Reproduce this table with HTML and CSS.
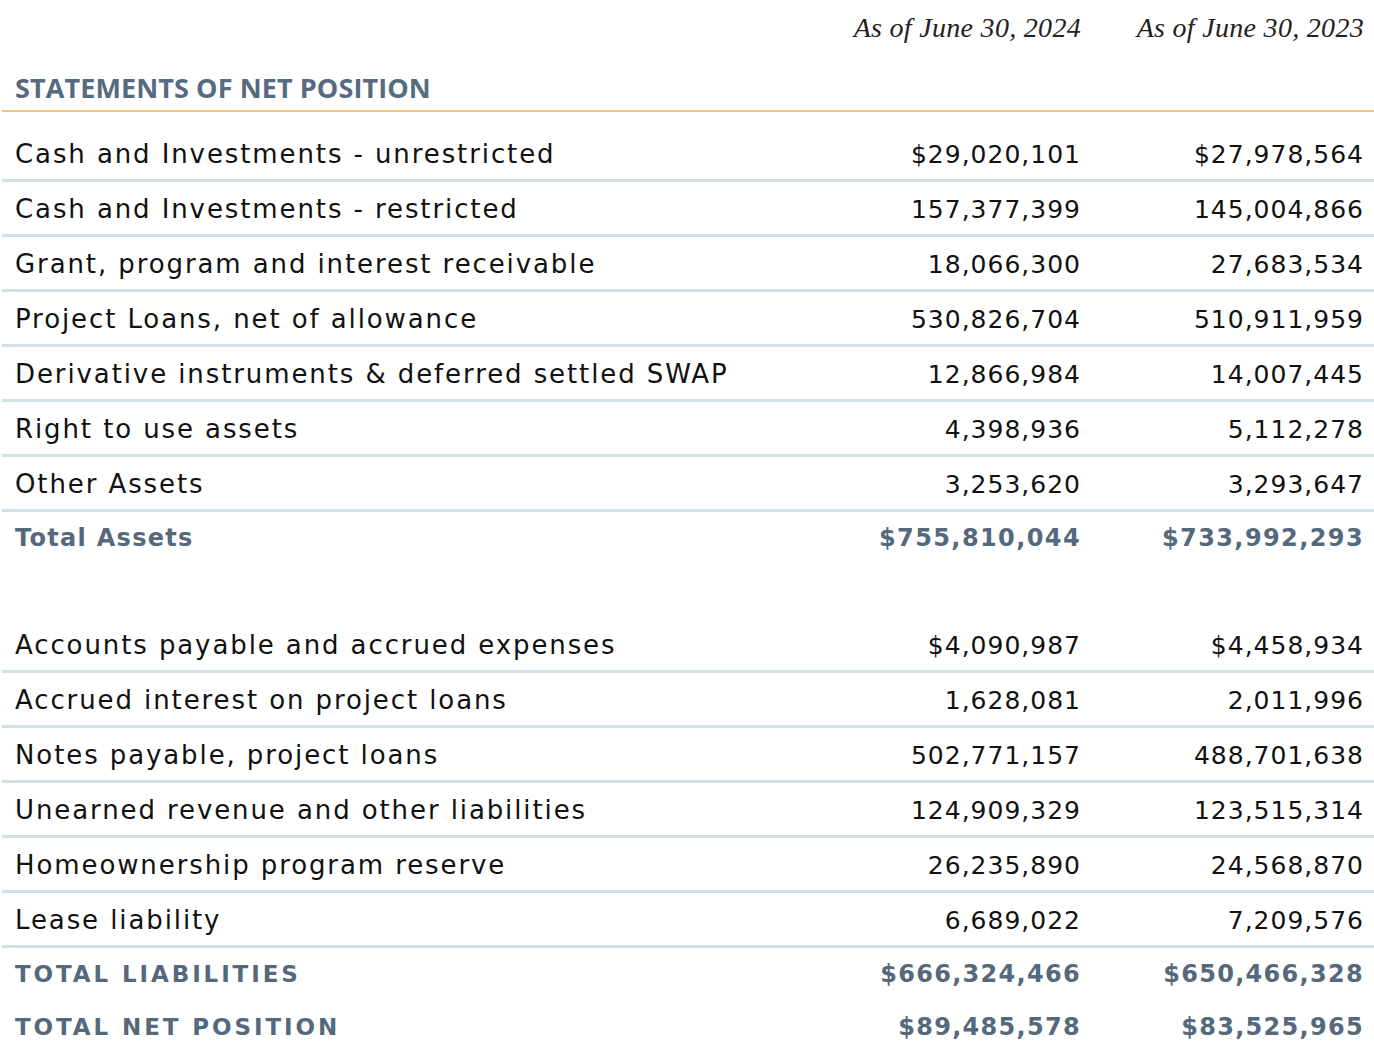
FILE: index.html
```html
<!DOCTYPE html>
<html lang="en">
<head>
<meta charset="utf-8">
<title>Statements of Net Position</title>
<link rel="stylesheet" href="styles.css">
</head>
<body>
<div class="sheet">
  <div class="head-row">
    <div></div>
    <div class="date">As of June 30, 2024</div>
    <div class="date">As of June 30, 2023</div>
  </div>
  <h1 class="title">STATEMENTS OF NET POSITION</h1>
  <div class="section first">
    <div class="row"><span class="label">Cash and Investments - unrestricted</span><span class="val">$29,020,101</span><span class="val">$27,978,564</span></div>
    <div class="row"><span class="label">Cash and Investments - restricted</span><span class="val">157,377,399</span><span class="val">145,004,866</span></div>
    <div class="row"><span class="label">Grant, program and interest receivable</span><span class="val">18,066,300</span><span class="val">27,683,534</span></div>
    <div class="row"><span class="label">Project Loans, net of allowance</span><span class="val">530,826,704</span><span class="val">510,911,959</span></div>
    <div class="row"><span class="label">Derivative instruments &amp; deferred settled SWAP</span><span class="val">12,866,984</span><span class="val">14,007,445</span></div>
    <div class="row"><span class="label">Right to use assets</span><span class="val">4,398,936</span><span class="val">5,112,278</span></div>
    <div class="row"><span class="label">Other Assets</span><span class="val">3,253,620</span><span class="val">3,293,647</span></div>
    <div class="row total"><span class="label">Total Assets</span><span class="val">$755,810,044</span><span class="val">$733,992,293</span></div>
  </div>
  <div class="section second">
    <div class="row"><span class="label">Accounts payable and accrued expenses</span><span class="val">$4,090,987</span><span class="val">$4,458,934</span></div>
    <div class="row"><span class="label">Accrued interest on project loans</span><span class="val">1,628,081</span><span class="val">2,011,996</span></div>
    <div class="row"><span class="label">Notes payable, project loans</span><span class="val">502,771,157</span><span class="val">488,701,638</span></div>
    <div class="row"><span class="label">Unearned revenue and other liabilities</span><span class="val">124,909,329</span><span class="val">123,515,314</span></div>
    <div class="row"><span class="label">Homeownership program reserve</span><span class="val">26,235,890</span><span class="val">24,568,870</span></div>
    <div class="row"><span class="label">Lease liability</span><span class="val">6,689,022</span><span class="val">7,209,576</span></div>
    <div class="row total caps"><span class="label">TOTAL LIABILITIES</span><span class="val">$666,324,466</span><span class="val">$650,466,328</span></div>
    <div class="row total caps"><span class="label">TOTAL NET POSITION</span><span class="val">$89,485,578</span><span class="val">$83,525,965</span></div>
  </div>
</div>
</body>
</html>
```

FILE: styles.css
```css
html, body {
  margin: 0;
  padding: 0;
  background: #ffffff;
}

body {
  font-family: "DejaVu Sans", "Liberation Sans", sans-serif;
  color: #111111;
}

.sheet {
  margin-left: 2px;
  width: 1372px;
}

.head-row,
.row {
  display: grid;
  grid-template-columns: 1fr 300px 283px;
  padding: 0 10px 0 13px;
}

.head-row {
  height: 48px;
  align-items: center;
}

.date {
  font-family: "Liberation Serif", "DejaVu Serif", serif;
  font-style: italic;
  font-size: 28px;
  letter-spacing: 0.3px;
  text-align: right;
  color: #222222;
  padding-top: 8px;
}

.title {
  margin: 0;
  padding: 20px 0 0 13px;
  height: 42px;
  font-family: "Open Sans", "Liberation Sans", sans-serif;
  font-weight: 700;
  font-size: 27px;
  letter-spacing: 0.1px;
  line-height: 40px;
  color: #566b7f;
  border-bottom: 2px solid #eec67e;
}

.section.first {
  padding-top: 15px;
}

.section.second {
  padding-top: 53px;
}

.row {
  height: 50px;
  padding-top: 2px;
  align-items: center;
  border-bottom: 3px solid #d0e1e5;
  font-size: 26px;
  letter-spacing: 1.9px;
}

.val {
  text-align: right;
  font-size: 25px;
  letter-spacing: 1px;
}

.row.total {
  height: 53px;
  padding-top: 0;
  border-bottom: none;
  padding-bottom: 1px;
  box-sizing: border-box;
  color: #55697c;
  font-weight: 700;
  font-size: 24px;
  letter-spacing: 1.3px;
}

.row.total .val {
  font-size: 24px;
  letter-spacing: 1.4px;
}

.row.total.caps {
  font-size: 23px;
  letter-spacing: 2.9px;
}

.row.total.caps .val {
  font-size: 24px;
  letter-spacing: 1.3px;
}
```
